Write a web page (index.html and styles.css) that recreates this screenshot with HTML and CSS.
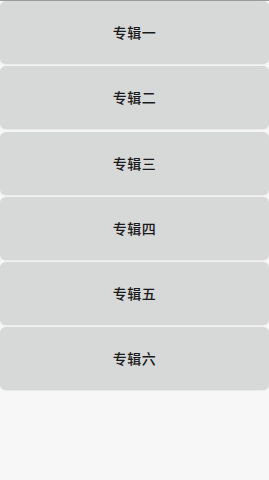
FILE: index.html
```html
<!DOCTYPE html>
<html lang="zh-CN">
<head>
  <meta charset="UTF-8" />
  <meta name="viewport" content="width=device-width, initial-scale=1" />
  <title>专辑</title>
  <link rel="stylesheet" href="styles.css">
</head>
<body>
  <div class="topline"></div>
  <main class="album-list">
    <button class="album-btn">专辑一</button>
    <button class="album-btn">专辑二</button>
    <button class="album-btn">专辑三</button>
    <button class="album-btn">专辑四</button>
    <button class="album-btn">专辑五</button>
    <button class="album-btn">专辑六</button>
  </main>
</body>
</html>
```

FILE: styles.css
```css
body {
  margin: 0;
  padding: 0;
  background: #f7f7f7;
  font-family: "Noto Sans CJK SC", "Noto Sans", sans-serif;
  min-height: 100vh;
}

.topline {
  height: 1px;
  background: #9c9c9c;
}

.album-list {
  display: flex;
  flex-direction: column;
  gap: 3.3px;
}

.album-btn {
  height: 62px;
  width: 100%;
  border: none;
  border-radius: 6px;
  background: #d7d8d8;
  color: #1a1a1a;
  font-family: inherit;
  font-size: 14px;
  font-weight: 500;
  letter-spacing: 0.5px;
  box-shadow: 0 1px 2px rgba(0, 0, 0, 0.18);
  cursor: pointer;
}
```
